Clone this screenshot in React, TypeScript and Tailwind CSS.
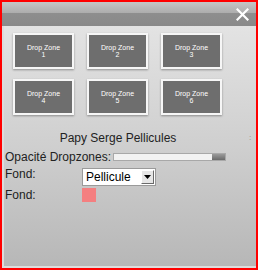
import React from "react";

const zones = [1, 2, 3, 4, 5, 6];

export default function App() {
  return (
    <div
      className="w-[258px] h-[270px] border-2 border-[#ff0000] flex flex-col overflow-hidden"
      style={{ fontFamily: '"Liberation Sans", Arial, sans-serif' }}
    >
      <div className="h-[24px] shrink-0 flex items-center justify-end pr-[7px] bg-[linear-gradient(to_bottom,#c6c6c6_0%,#adadad_45%,#8e8e8e_46%,#898989_100%)]">
        <svg width="13" height="13" viewBox="0 0 13 13" className="mt-[1px]">
          <path d="M1.5 1.5 L11.5 11.5 M11.5 1.5 L1.5 11.5" stroke="#ffffff" strokeWidth="2.2" strokeLinecap="square" />
        </svg>
      </div>
      <div className="flex-1 flex flex-col pl-[1px] border-l-2 border-b-2 border-[#dcdcdc] bg-[linear-gradient(to_bottom,#e3e3e3_0%,#cfcfcf_50%,#b7b7b7_100%)]">
        <div className="grid grid-cols-[61px_61px_61px] gap-x-[13px] gap-y-[10px] ml-[8px] mt-[7px]">
          {zones.map((z) => (
            <div
              key={z}
              className="h-[36px] bg-[#6e6e6e] border-2 border-[#f6f6f6] shadow-[0_1px_2px_rgba(0,0,0,0.35)] flex flex-col items-center justify-center text-white text-[7px] leading-[7px]"
            >
              <span>Drop Zone</span>
              <span>{z}</span>
            </div>
          ))}
        </div>
        <div className="flex items-center mt-[16px] h-[14px]">
          <div className="w-[226px] flex justify-center">
            <span className="text-[12px] leading-[14px] text-[#222]">Papy Serge Pellicules</span>
          </div>
          <div className="ml-[18px] text-[8px] leading-[14px] text-[#888]">:</div>
        </div>
        <div className="flex items-center mt-[6px] h-[12px]">
          <span className="text-[12px] leading-[12px] text-[#222] w-[108px]">Opacité Dropzones:</span>
          <div className="w-[113px] h-[8px] border border-[#a8a8a8] bg-[#f2f2f2] flex justify-end">
            <div className="w-[13px] h-full bg-[linear-gradient(to_bottom,#9a9a9a,#6a6a6a)]"></div>
          </div>
        </div>
        <div className="flex items-start mt-[5px] h-[18px]">
          <span className="text-[12px] leading-[12px] text-[#222] w-[77px]">Fond:</span>
          <div className="w-[74px] h-[18px] bg-white border border-[#9a9a9a] flex items-center pl-[3px] pr-[1px]">
            <span className="flex-1 text-[12px] leading-[12px] text-black">Pellicule</span>
            <div className="w-[13px] h-[14px] border border-t-white border-l-white border-r-[#6a6a6a] border-b-[#6a6a6a] bg-[#e6e6e6] flex items-center justify-center">
              <svg width="7" height="4" viewBox="0 0 7 4">
                <path d="M0 0 H7 L3.5 4 Z" fill="#000" />
              </svg>
            </div>
          </div>
        </div>
        <div className="flex items-center mt-[2px] h-[14px]">
          <span className="text-[12px] leading-[12px] text-[#222] w-[77px]">Fond:</span>
          <div className="w-[14px] h-[14px] bg-[#f47f80]"></div>
        </div>
      </div>
    </div>
  );
}
